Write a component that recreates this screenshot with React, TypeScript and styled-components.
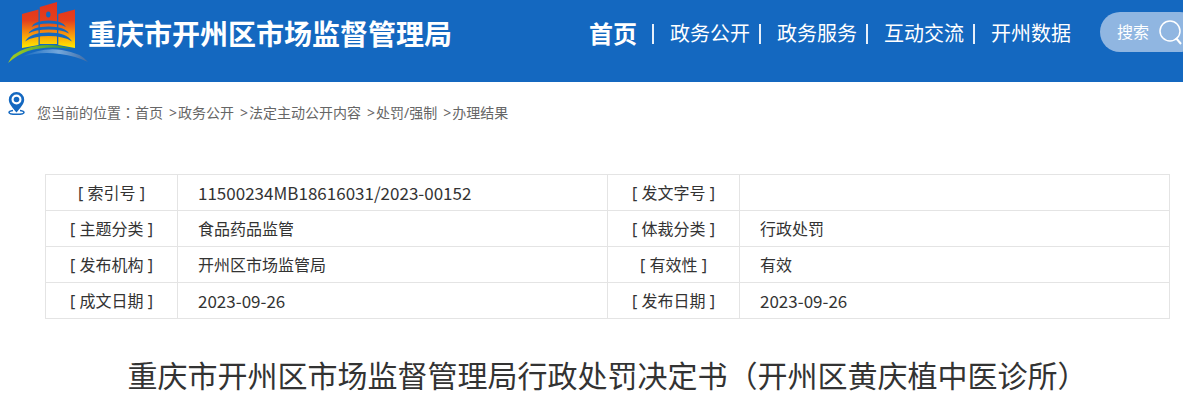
import React from "react";
import styled, { createGlobalStyle } from "styled-components";

const GlobalStyle = createGlobalStyle`
  * { box-sizing: border-box; }
  body {
    margin: 0;
    background: #fff;
    color: #333;
    font-family: "Noto Sans", "Noto Sans CJK SC", sans-serif;
    font-size: 16px;
    overflow-x: hidden;
  }
  a { color: inherit; text-decoration: none; }
`;

const Header = styled.header`
  display: flex;
  align-items: flex-start;
  height: 82px;
  padding-left: 8px;
  background: #1468c0;
  color: #fff;
  overflow: hidden;
`;

const Brand = styled.a`
  display: flex;
  flex: none;
  font-size: 28px;
  font-weight: 700;
  line-height: 68px;
  white-space: nowrap;
`;

const Nav = styled.nav`
  display: flex;
  flex: none;
  align-items: center;
  height: 68px;
  margin-left: auto;
  white-space: nowrap;
`;

const NavLink = styled.a<{ $active?: boolean }>`
  font-size: ${(p) => (p.$active ? 24 : 20)}px;
  font-weight: ${(p) => (p.$active ? 700 : 400)};
  line-height: 32px;
`;

const Divider = styled.span<{ $wide?: boolean }>`
  width: 2px;
  height: 20px;
  margin: 0 16px 0 ${(p) => (p.$wide ? 15 : 9)}px;
  background: #e6effa;
`;

const Search = styled.form`
  display: flex;
  flex: none;
  align-items: center;
  width: 100px;
  height: 40px;
  margin: 12px -17px 0 29px;
  padding-left: 17px;
  border-radius: 20px;
  background: #90b6e1;
`;

const SearchInput = styled.input`
  width: 41px;
  padding: 0;
  border: 0;
  outline: 0;
  background: none;
  color: #fff;
  font: inherit;
  &::placeholder { color: #fff; opacity: 1; }
`;

const SearchButton = styled.button`
  display: flex;
  padding: 0;
  border: 0;
  background: none;
`;

const Crumbs = styled.nav`
  display: flex;
  align-items: flex-start;
  gap: 12px;
  padding: 10px 8px 0;
  color: #666;
  font-size: 14px;
`;

const CrumbText = styled.div`
  padding-top: 10px;
  line-height: 20px;
`;

const Separator = styled.span`
  margin: 0 1px 0 6px;
`;

const Colon = styled.span`
  font-family: "Noto Sans CJK TC", sans-serif;
`;

const Article = styled.main`
  padding: 51px 13px 0 45px;
`;

const InfoTable = styled.table`
  width: 100%;
  table-layout: fixed;
  border-collapse: collapse;
`;

const Label = styled.th`
  width: 132px;
  height: 36px;
  padding: 0;
  border: 1px solid #e4e4e4;
  font-weight: 400;
  line-height: 24px;
  text-align: center;
`;

const Value = styled.td<{ $latin?: boolean }>`
  height: 36px;
  padding: 0 20px;
  border: 1px solid #e4e4e4;
  font-family: ${(p) => (p.$latin ? '"Noto Sans CJK SC", sans-serif' : "inherit")};
  font-size: ${(p) => (p.$latin ? 17 : 16)}px;
  line-height: 24px;
`;

const Title = styled.h1`
  margin: 33px 0 0;
  font-size: 30px;
  font-weight: 400;
  line-height: 48px;
  text-align: center;
`;

const Logo = () => (
  <svg width="80" height="68" viewBox="8 0 80 68" aria-hidden="true">
    <defs>
      <linearGradient id="tower" gradientUnits="userSpaceOnUse" x1="0" y1="3" x2="0" y2="47">
        <stop offset="0" stopColor="#e2331d" />
        <stop offset="0.4" stopColor="#e5401c" />
        <stop offset="0.72" stopColor="#f89a0c" />
        <stop offset="1" stopColor="#ffe500" />
      </linearGradient>
      <linearGradient id="hill" x1="0" y1="0" x2="1" y2="0">
        <stop offset="0" stopColor="#a5cb20" />
        <stop offset="0.5" stopColor="#65b32e" />
        <stop offset="1" stopColor="#278b50" />
      </linearGradient>
      <linearGradient id="river" x1="0" y1="0" x2="1" y2="0">
        <stop offset="0" stopColor="#1468c0" />
        <stop offset="0.55" stopColor="#74a8dc" />
        <stop offset="1" stopColor="#3e6ba5" />
      </linearGradient>
    </defs>
    <path d="M22 14L38.500 9.500V45L22 48Z" fill="url(#tower)" />
    <path d="M39.800 7L57 2V44H39.800Z" fill="url(#tower)" />
    <path d="M58.300 14L75 9.500V48L58.300 45Z" fill="url(#tower)" />
    <ellipse cx="48.300" cy="14.500" rx="2.200" ry="3" fill="#1468c0" />
    <g fill="#1468c0">
      <path d="M31.500 27Q34 20.500 48.500 20.500T66 27Q60 23.500 48.500 23.500T31.500 27Z" />
      <path d="M28.500 33.500Q32 26.500 48.500 26.500T69 33.500Q62 29.500 48.500 29.500T28.500 33.500Z" />
      <path d="M25 41.500Q30 32.500 48.500 32.500T72 41.500Q64 36 48.500 36T25 41.500Z" />
    </g>
    <path d="M8 63Q12 53 25 49Q47 41 73 49Q46 45 28 51Q17 55 8 63Z" fill="url(#hill)" />
    <path d="M22 57Q41 47 62 50Q81 53 88 62Q76 56 60 54Q40 51 22 57Z" fill="url(#river)" />
  </svg>
);

const Pin = () => (
  <svg width="17" height="24" viewBox="0 0 17 24" fill="none" aria-hidden="true">
    <path d="M5 18.500C2.500 18.800 1 19.500 1 20.500C1 21.700 4 22.300 8.500 22.300S16 21.700 16 20.500C16 19.500 14.500 18.800 12 18.500" stroke="#1468c0" strokeWidth="1.500" />
    <path fillRule="evenodd" d="M8.500 0A7.700 7.700 0 0 1 16.200 7.700C16.200 12 12 16 8.500 20.500C5 16 .8 12 .8 7.700A7.700 7.700 0 0 1 8.500 0ZM8.500 2.500A5 5 0 1 0 8.500 12.500A5 5 0 1 0 8.500 2.500Z" fill="#1468c0" />
    <circle cx="8.500" cy="7.500" r="2.800" fill="#1468c0" />
  </svg>
);

const navItems = ["政务公开", "政务服务", "互动交流", "开州数据"];
const crumbs = ["首页", "政务公开", "法定主动公开内容", "处罚/强制", "办理结果"];
const rows = [
  ["索引号", "11500234MB18616031/2023-00152", "发文字号", ""],
  ["主题分类", "食品药品监管", "体裁分类", "行政处罚"],
  ["发布机构", "开州区市场监管局", "有效性", "有效"],
  ["成文日期", "2023-09-26", "发布日期", "2023-09-26"],
];
const isLatin = (text: string) => /^\d/.test(text);

export default function App() {
  return (
    <>
      <GlobalStyle />
      <Header>
        <Brand href="#">
          <Logo />
          重庆市开州区市场监督管理局
        </Brand>
        <Nav>
          <NavLink href="#" $active>首页</NavLink>
          {navItems.map((item, i) => (
            <React.Fragment key={item}>
              <Divider $wide={i === 0} />
              <NavLink href="#">{item}</NavLink>
            </React.Fragment>
          ))}
        </Nav>
        <Search>
          <SearchInput type="text" placeholder="搜索" aria-label="搜索" />
          <SearchButton type="button" aria-label="搜索">
            <svg width="26" height="26" viewBox="0 0 26 26" fill="none" stroke="#fff" strokeWidth="1.500">
              <circle cx="12" cy="12" r="10" />
              <path d="M18 19L23 25" strokeWidth="2" />
            </svg>
          </SearchButton>
        </Search>
      </Header>
      <Crumbs>
        <Pin />
        <CrumbText>
          您当前的位置<Colon>：</Colon>
          {crumbs.map((crumb, i) => (
            <React.Fragment key={crumb}>
              {i > 0 && <Separator>&gt;</Separator>}
              <a href="#">{crumb}</a>
            </React.Fragment>
          ))}
        </CrumbText>
      </Crumbs>
      <Article>
        <InfoTable>
          <tbody>
            {rows.map(([a, b, c, d]) => (
              <tr key={a}>
                <Label scope="row">[ {a} ]</Label>
                <Value $latin={isLatin(b)}>{b}</Value>
                <Label scope="row">[ {c} ]</Label>
                <Value $latin={isLatin(d)}>{d}</Value>
              </tr>
            ))}
          </tbody>
        </InfoTable>
        <Title>重庆市开州区市场监督管理局行政处罚决定书（开州区黄庆植中医诊所）</Title>
      </Article>
    </>
  );
}
